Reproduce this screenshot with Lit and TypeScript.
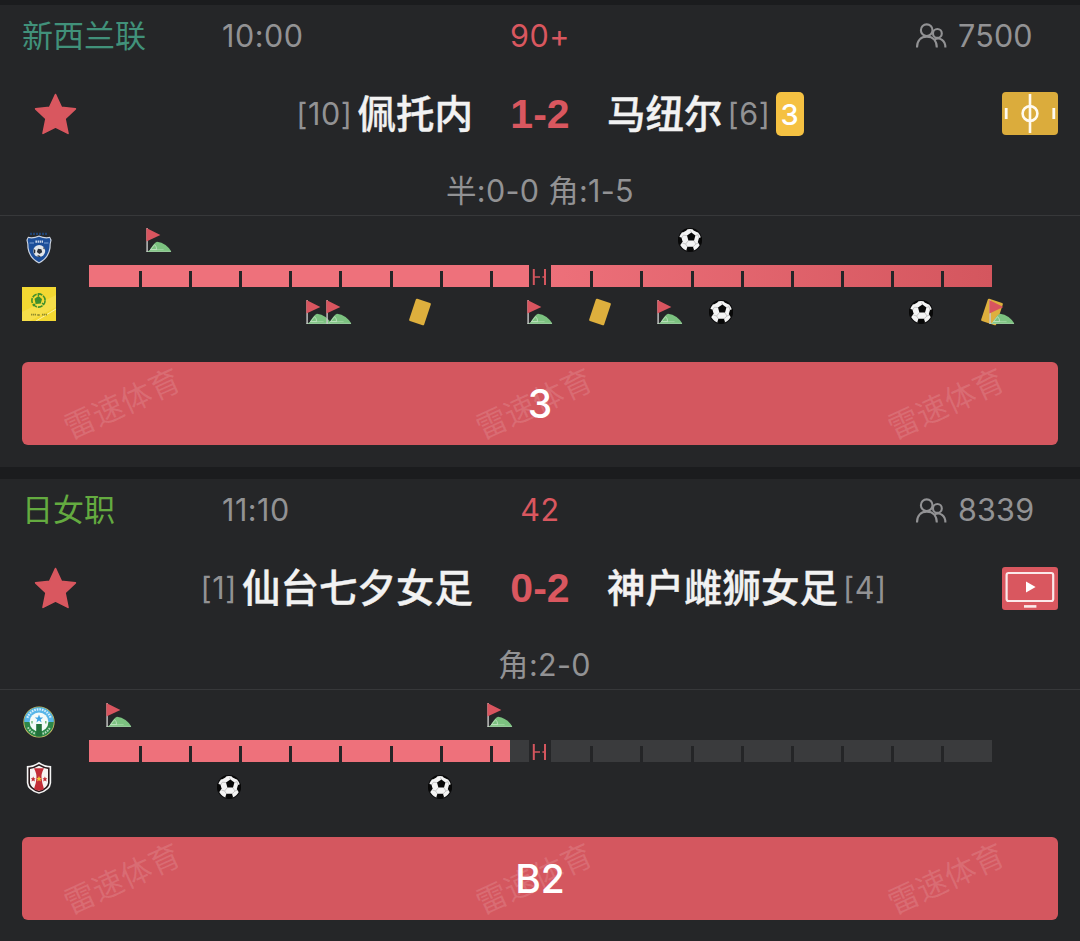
import { LitElement, html, svg, css } from "lit";
import { customElement, property } from "lit/decorators.js";

type EventKind = "corner" | "card" | "goal";
type CrestName = "shield" | "square" | "round" | "stripe";

interface MatchEvent {
  minute: number;
  kind: EventKind;
}

interface Team {
  name: string;
  rank: number;
  crest: CrestName;
  cards?: number;
  events: MatchEvent[];
}

interface Match {
  league: string;
  leagueColor: string;
  time: string;
  minute: string;
  elapsed: number;
  viewers: number;
  score: string;
  stats: string;
  feed: "pitch" | "video";
  button: string;
  home: Team;
  away: Team;
}

const MATCHES: Match[] = [
  {
    league: "新西兰联",
    leagueColor: "#41917a",
    time: "10:00",
    minute: "90+",
    elapsed: 90,
    viewers: 7500,
    score: "1-2",
    stats: "半:0-0 角:1-5",
    feed: "pitch",
    button: "3",
    home: {
      name: "佩托内",
      rank: 10,
      crest: "shield",
      events: [{ minute: 7, kind: "corner" }, { minute: 60, kind: "goal" }],
    },
    away: {
      name: "马纽尔",
      rank: 6,
      crest: "square",
      cards: 3,
      events: [
        { minute: 23, kind: "corner" },
        { minute: 25, kind: "corner" },
        { minute: 33, kind: "card" },
        { minute: 45, kind: "corner" },
        { minute: 51, kind: "card" },
        { minute: 58, kind: "corner" },
        { minute: 63, kind: "goal" },
        { minute: 83, kind: "goal" },
        { minute: 90, kind: "card" },
        { minute: 91, kind: "corner" },
      ],
    },
  },
  {
    league: "日女职",
    leagueColor: "#64ab40",
    time: "11:10",
    minute: "42",
    elapsed: 42,
    viewers: 8339,
    score: "0-2",
    stats: " 角:2-0",
    feed: "video",
    button: "B2",
    home: {
      name: "仙台七夕女足",
      rank: 1,
      crest: "round",
      events: [{ minute: 3, kind: "corner" }, { minute: 41, kind: "corner" }],
    },
    away: {
      name: "神户雌狮女足",
      rank: 4,
      crest: "stripe",
      events: [{ minute: 14, kind: "goal" }, { minute: 35, kind: "goal" }],
    },
  },
];

@customElement("event-icon")
export class EventIcon extends LitElement {
  @property() public kind: EventKind = "corner";

  static styles = css`
    :host {
      display: block;
      width: 26px;
      height: 24px;
    }

    svg {
      display: block;
      overflow: visible;
    }
  `;

  private shape() {
    switch (this.kind) {
      case "card":
        return svg`<rect x="5.1" y="0.3" width="15.8" height="23.4" rx="1.2" fill="#deaf3d" transform="rotate(18.4 13 12)" />`;
      case "goal":
        return svg`
          <circle cx="13" cy="12" r="12" fill="#0b0b0c" />
          <circle cx="13" cy="12" r="11" fill="#f4f4f4" />
          <path
            d="M14.4 4.8 L13.4 2.4 M18.4 7.6 L21 6.6 M16.8 12.6 L19 16 M11.4 12.6 L8.6 16 M10 7.6 L6.4 7.2 M6.4 7.2 L4.6 10 M8.6 16 L5.4 15 M8.6 16 L10.4 18.8 M19 16 L16 18.8 M19 16 L21.4 15 M21 6.6 L22 10"
            stroke="#b4b4b4" stroke-width="0.7" fill="none"
          />
          <g fill="#080808">
            <path d="M14.4 4.6 L18.4 7.4 L17 12.4 L11.4 12.4 L10 7.4 Z" />
            <path d="M1.2 8.8 L4.4 9.6 L5.6 13.6 L3.6 16.8 L2 16.8 Q0.4 12.8 1.2 8.8 Z" />
            <path d="M24.8 9 L22 10 L20.8 14 L22.6 17 L24 16.8 Q25.6 12.8 24.8 9 Z" />
            <path d="M10.4 18.8 L16 18.8 L17.2 22.6 Q13 24.6 9.2 22.6 Z" />
            <path d="M4.4 3.6 Q7 0.8 10.8 0.3 L9.4 2.4 L5.8 4.6 Z" />
            <path d="M15.2 0.3 Q19.6 1 22 4.2 L20.2 4.2 L16.6 2.4 Z" />
          </g>
        `;
      default:
        return svg`
          <path d="M3 23.5 Q7.6 15 11 13.7 Q20.4 15 25.3 23.5 Z" fill="#7cc280" />
          <path d="M0.5 23.4 H25 M5.4 21.6 H17.6" stroke="#9ed3a1" stroke-width="1" fill="none" />
          <path d="M3.6 22.6 L8.6 16.6 Q10.8 18.6 10.6 21.6 H4.8" fill="none" stroke="#c4e4c5" stroke-width="0.8" />
          <rect x="0.4" y="0" width="1.4" height="24" fill="#c9c9c9" />
          <path d="M0.4 0 L14.4 6.9 L0.4 13.4 Z" fill="#d9555f" />
        `;
    }
  }

  protected render() {
    return html`<svg width="26" height="24" viewBox="0 0 26 24">${this.shape()}</svg>`;
  }
}

@customElement("team-crest")
export class TeamCrest extends LitElement {
  @property() public name: CrestName = "shield";

  static styles = css`
    :host {
      display: block;
      width: 34px;
      height: 34px;
    }

    svg {
      display: block;
    }
  `;

  private shape() {
    switch (this.name) {
      case "square":
        return svg`
          <rect width="34" height="34" fill="#f3d832" />
          <path d="M0 25 L34 8 V20 L8 34 H0 Z" fill="#f8e25a" opacity="0.6" />
          <path d="M14 34 L34 22" stroke="#fbf0a0" stroke-width="1" />
          <circle cx="16.5" cy="13.5" r="6.6" fill="none" stroke="#3f8f2c" stroke-width="1.6" stroke-dasharray="5 1" />
          <path d="M16.5 9 L20 12 L18.8 16.5 L13.6 17 L12.6 11.8 Z" fill="#3f8f2c" />
          <path d="M13 17 L11 19 M20 16 L22 17.6 M16.4 9 V7.2" stroke="#3f8f2c" stroke-width="1.4" />
          <path d="M9 27.6 H14 M15.4 28 H18 M20 27.6 H25" stroke="#8f8a2c" stroke-width="1.8" stroke-dasharray="1.4 0.6" />
        `;
      case "round":
        return svg`
          <circle cx="17" cy="17" r="15.6" fill="#d9c66b" />
          <circle cx="17" cy="17" r="14.8" fill="#2d8749" />
          <path d="M2.2 17 A14.8 14.8 0 0 1 31.8 17 Z" fill="#58b6e9" />
          <path d="M5.4 12.8 A12.2 12.2 0 0 1 28.6 12.8" fill="none" stroke="#d5effb" stroke-width="2.2" stroke-dasharray="1.6 1" />
          <path d="M6 22.4 A12.2 12.2 0 0 0 13.5 28.8 M20.5 28.8 A12.2 12.2 0 0 0 28 22.4" fill="none" stroke="#b7dabf" stroke-width="2" stroke-dasharray="1.6 1" />
          <circle cx="17" cy="17" r="9.4" fill="#f3faf8" />
          <path d="M17 9.4 l1.1 3 3.1 .1 -2.5 1.9 .9 3 -2.6 -1.8 -2.6 1.8 .9 -3 -2.5 -1.9 3.1 -.1 Z" fill="#3ea4e4" />
          <rect x="14.2" y="19" width="5.6" height="12.4" fill="#22703a" />
          <path d="M10 16 v2.6 M23.8 16 v2.6" stroke="#55aa5b" stroke-width="1.2" />
        `;
      case "stripe":
        return svg`
          <path d="M17 1 Q22.6 4.8 29.2 5 V22 Q28.6 29.6 17 32.8 Q5.4 29.6 4.8 22 V5 Q11.4 4.8 17 1 Z" fill="#f4f4f4" />
          <path d="M17 3 Q22.4 6.4 27.6 6.6 V22 Q27 28.4 17 31.2 Q7 28.4 6.4 22 V6.6 Q11.6 6.4 17 3 Z" fill="#2a1a1c" />
          <path d="M17 4.8 Q21.6 7.6 26 8 V21.8 Q25.4 27.2 17 29.8 Q8.6 27.2 8 21.8 V8 Q12.4 7.6 17 4.8 Z" fill="#f7f3f2" />
          <path d="M12 7.2 H22 Q18.8 13 19.6 17.4 Q20 22 22 28 Q17 31 12 28 Q14.2 22 14.4 17.4 Q15 13 12 7.2 Z" fill="#c22c36" />
          <path d="M11.2 15.4 l.8 1.8 h1.6 l-1.2 1.2 .5 2 -1.7 -1 -1.7 1 .5 -2 -1.2 -1.2 h1.6 Z M22.9 15.4 l.8 1.8 h1.6 l-1.2 1.2 .5 2 -1.7 -1 -1.7 1 .5 -2 -1.2 -1.2 h1.6 Z" fill="#c22c36" />
          <path d="M17 15 l.9 1.9 h1.8 l-1.4 1.3 .6 2.2 -1.9 -1.1 -1.9 1.1 .6 -2.2 -1.4 -1.3 h1.8 Z" fill="#f0c63a" />
        `;
      default:
        return svg`
          <path d="M8 2.8 H26" stroke="#1f4374" stroke-width="2.2" stroke-dasharray="2 1" />
          <path d="M17 4.6 Q23 7 28 5.8 L29.6 9 Q28.6 12 28.6 17 Q27 27.6 17 32.6 Q7 27.6 5.4 17 Q5.4 12 4.4 9 L6 5.8 Q11 7 17 4.6 Z" fill="#cfd6e2" />
          <path d="M17 5.8 Q23 8.2 27.6 7 L28.4 9.2 Q27.4 12.4 27.4 17 Q26 26.6 17 31.2 Q8 26.6 6.6 17 Q6.6 12.4 5.6 9.2 L6.4 7 Q11 8.2 17 5.8 Z" fill="#1d4f9a" />
          <path d="M7.6 12 H12 M22 12 H26.4" stroke="#7fa1d3" stroke-width="1.2" />
          <path d="M13.4 10.6 H21" stroke="#c9d6ea" stroke-width="2.2" stroke-dasharray="1.6 0.6" />
          <circle cx="17.2" cy="20" r="6" fill="#e2e6ea" />
          <path d="M16 17.8 l3.4 .4 .8 3 -2.8 1.8 -2.6 -2 Z M11.6 18 l1.8 1 -.2 3 -1.4 .4 Z M21.6 15.8 l1.4 2.4 -1.6 -.2 Z M14.6 25 l2.2 -.8 2 1.2 -1.4 .6 Z" fill="#2a2f38" />
        `;
    }
  }

  protected render() {
    return html`<svg width="34" height="34" viewBox="0 0 34 34">${this.shape()}</svg>`;
  }
}

@customElement("match-timeline")
export class MatchTimeline extends LitElement {
  @property({ attribute: false }) public home: MatchEvent[] = [];
  @property({ attribute: false }) public away: MatchEvent[] = [];
  @property({ type: Number }) public elapsed = 0;

  static styles = css`
    :host {
      display: flex;
      flex-direction: column;
      gap: 13px;
    }

    .lane {
      position: relative;
      height: 24px;
    }

    .lane event-icon {
      position: absolute;
      top: 0;
      transform: translateX(-50%);
    }

    .bar {
      position: relative;
      height: 22px;
      background: #3a3b3d;
    }

    .progress {
      height: 100%;
      background: linear-gradient(90deg, #ee717b 0, #ee717b 440px, #d4565e 903px);
    }

    .ticks {
      position: absolute;
      inset: 6px 0 0 0;
      display: grid;
      grid-template-columns: repeat(18, 1fr);
    }

    .tick {
      border-left: 3px solid #242527;
    }

    .tick:first-child {
      border-left: none;
    }

    .half {
      position: absolute;
      top: 0;
      left: 50%;
      width: 22px;
      height: 22px;
      transform: translateX(-50%);
      background: #252628;
    }
  `;

  private lane(events: MatchEvent[]) {
    return html`
      <div class="lane">
        ${events.map(
          (e) => html`<event-icon .kind=${e.kind} style="left: ${(e.minute / 90) * 100}%"></event-icon>`
        )}
      </div>
    `;
  }

  protected render() {
    return html`
      ${this.lane(this.home)}
      <div class="bar">
        <div class="progress" style="width: ${(this.elapsed / 90) * 100}%"></div>
        <div class="ticks">${Array.from({ length: 18 }, () => html`<span class="tick"></span>`)}</div>
        <svg class="half" viewBox="0 0 22 22">
          <path d="M4.8 4 V20 M16 4 V20" stroke="#d4565e" stroke-width="2" />
          <path d="M5 12 H11 M13.4 12 H16" stroke="#d4565e" stroke-width="1.6" />
        </svg>
      </div>
      ${this.lane(this.away)}
    `;
  }
}

@customElement("match-card")
export class MatchCard extends LitElement {
  @property({ attribute: false }) public match!: Match;

  static styles = css`
    :host {
      display: block;
      box-sizing: border-box;
      height: 462.7px;
      background: #252628;
      color: #929294;
      font-family: Inter, "Noto Sans CJK SC", sans-serif;
      font-size: 30.5px;
      line-height: 40px;
      white-space: nowrap;
    }

    .head {
      display: grid;
      grid-template-columns: 200px 238px 160px 295px 1fr;
      align-items: center;
      height: 62px;
      padding: 0 22px;
    }

    .league {
      font-size: 31px;
    }

    .time {
      letter-spacing: 0.5px;
    }

    .minute {
      color: #d9575f;
      text-align: center;
      letter-spacing: 0.5px;
    }

    .viewers {
      display: flex;
      align-items: center;
      gap: 11px;
      letter-spacing: 0.2px;
    }

    .teams {
      display: grid;
      grid-template-columns: 91px 1fr 134px 1fr 91px;
      align-items: center;
      height: 94px;
      padding: 0 22px;
    }

    .star {
      margin-left: 12px;
    }

    .team {
      display: flex;
      align-items: center;
      gap: 5px;
    }

    .team.home {
      justify-content: flex-end;
    }

    .name {
      color: #f2f2f2;
      font-size: 38.5px;
      font-weight: 500;
      -webkit-text-stroke: 0.4px #f2f2f2;
    }

    .rank {
      letter-spacing: 0.6px;
    }

    .score {
      color: #d9575f;
      font: bold 41px/44px "Liberation Sans", Arial, sans-serif;
      text-align: center;
    }

    .cards {
      width: 28px;
      height: 44px;
      border-radius: 5px;
      background: #f5c142;
      color: #fff;
      font-size: 29px;
      font-weight: 500;
      line-height: 46px;
      text-align: center;
    }

    .feed {
      justify-self: end;
    }

    .stats {
      height: 54px;
      line-height: 60px;
      letter-spacing: 0.3px;
      text-align: center;
      white-space: pre;
      border-bottom: 1px solid #37383a;
    }

    .events {
      display: grid;
      grid-template-columns: 66.5px 903px;
      padding: 12.5px 22px 0;
    }

    .crests {
      display: flex;
      flex-direction: column;
      gap: 22px;
      padding-top: 2.5px;
    }

    .action {
      position: relative;
      height: 83px;
      margin: 38px 22px 0;
      border-radius: 6px;
      background: #d4575f;
      color: #fff;
      font-size: 39px;
      font-weight: 500;
      line-height: 84px;
      text-align: center;
      overflow: hidden;
    }

    .label {
      position: relative;
    }

    .watermark {
      position: absolute;
      inset: 0;
      display: flex;
      justify-content: space-between;
      padding: 0 50px 0 38px;
      color: rgba(255, 255, 255, 0.13);
      font-size: 31px;
      font-weight: 400;
    }

    .watermark span {
      transform: rotate(-24.6deg);
    }

    svg {
      display: block;
    }
  `;

  private renderFeed() {
    return this.match.feed === "pitch"
      ? html`
          <svg class="feed" width="56" height="43" viewBox="0 0 56 43">
            <rect width="56" height="43" rx="4" fill="#dbac3c" />
            <path d="M28 2 V41" stroke="#fffaf0" stroke-width="2.6" />
            <circle cx="28" cy="21.5" r="7.4" fill="none" stroke="#fffaf0" stroke-width="2.6" />
            <path d="M4.2 16 V27 M51.8 16 V27" stroke="#fffaf0" stroke-width="2.8" />
          </svg>
        `
      : html`
          <svg class="feed" width="56" height="43" viewBox="0 0 56 43">
            <rect width="56" height="43" rx="3" fill="#d9575f" />
            <rect x="4.6" y="6" width="46.6" height="28" rx="2" fill="none" stroke="#fbe9ea" stroke-width="2.2" />
            <path d="M24 14.4 L33.6 20 L24 25.6 Z" fill="#fff" />
            <path d="M22 39.4 H34.4" stroke="#fbe9ea" stroke-width="2.6" />
          </svg>
        `;
  }

  protected render() {
    const m = this.match;
    return html`
      <div class="head">
        <span class="league" style="color: ${m.leagueColor}">${m.league}</span>
        <span class="time">${m.time}</span>
        <span class="minute">${m.minute}</span>
        <span></span>
        <span class="viewers">
          <svg width="32" height="27" viewBox="0 0 32 27" fill="none" stroke="#929294" stroke-width="2.1">
            <circle cx="11.7" cy="8.2" r="5.8" />
            <path d="M2 25.6 C2 18.4 6 14.6 11.8 14.6 C17.6 14.6 21.8 18.4 21.8 25.6" />
            <circle cx="22.4" cy="11.4" r="4.4" />
            <path d="M19.4 17.6 C25 14.6 30.4 18.6 30.4 25.4" />
          </svg>
          ${m.viewers}
        </span>
      </div>
      <div class="teams">
        <svg class="star" width="43" height="42" viewBox="0 0 43 42">
          <path
            d="M21.5 1.6 L27.3 14.2 L41.4 15.8 L31 25.6 L34 40.4 L21.5 34 L9 40.4 L12 25.6 L1.6 15.8 L15.7 14.2 Z"
            fill="#d9575f" stroke="#d9575f" stroke-width="1.6" stroke-linejoin="round"
          />
        </svg>
        <div class="team home">
          <span class="rank">[${m.home.rank}]</span>
          <span class="name">${m.home.name}</span>
        </div>
        <span class="score">${m.score}</span>
        <div class="team">
          <span class="name">${m.away.name}</span>
          <span class="rank">[${m.away.rank}]</span>
          ${m.away.cards ? html`<span class="cards">${m.away.cards}</span>` : ""}
        </div>
        ${this.renderFeed()}
      </div>
      <div class="stats">${m.stats}</div>
      <div class="events">
        <div class="crests">
          <team-crest .name=${m.home.crest}></team-crest>
          <team-crest .name=${m.away.crest}></team-crest>
        </div>
        <match-timeline
          .home=${m.home.events}
          .away=${m.away.events}
          .elapsed=${m.elapsed}
        ></match-timeline>
      </div>
      <div class="action">
        <div class="watermark"><span>雷速体育</span><span>雷速体育</span><span>雷速体育</span></div>
        <span class="label">${m.button}</span>
      </div>
    `;
  }
}

@customElement("app-root")
export class AppRoot extends LitElement {
  static styles = css`
    :host {
      display: flex;
      flex-direction: column;
      gap: 12px;
      box-sizing: border-box;
      height: 941px;
      padding-top: 4.5px;
      background: #1b1c1e;
      overflow: hidden;
    }

    match-card {
      flex: none;
    }
  `;

  protected render() {
    return MATCHES.map((m) => html`<match-card .match=${m}></match-card>`);
  }
}

declare global {
  interface HTMLElementTagNameMap {
    "event-icon": EventIcon;
    "team-crest": TeamCrest;
    "match-timeline": MatchTimeline;
    "match-card": MatchCard;
    "app-root": AppRoot;
  }
}
